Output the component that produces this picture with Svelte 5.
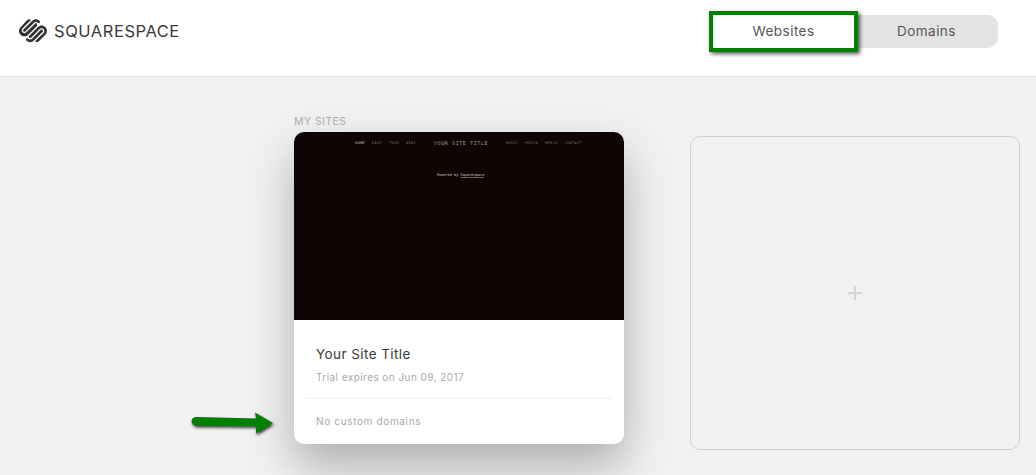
<script>
  const leftLinks = ['HOME', 'BAKE', 'TOUR', 'NEWS'];
  const rightLinks = ['MUSIC', 'MEDIA', 'MERCH', 'CONTACT'];
</script>

<div class="page">
  <header class="topbar">
    <div class="logo">
      <svg class="mark" viewBox="0 0 24 24" width="28" height="28" aria-hidden="true">
        <path fill="#333" d="M22.655 8.719c-1.802-1.801-4.726-1.801-6.564 0l-7.351 7.35c-.45.45-.45 1.2 0 1.65.45.449 1.2.449 1.65 0l7.351-7.351c.899-.899 2.362-.899 3.264 0 .9.9.9 2.364 0 3.264l-7.239 7.239c.9.899 2.362.899 3.263 0l5.589-5.589c1.836-1.838 1.836-4.763.037-6.563zm-2.475 2.437c-.451-.45-1.201-.45-1.65 0l-7.354 7.389c-.9.899-2.361.899-3.262 0-.45-.45-1.2-.45-1.65 0s-.45 1.2 0 1.649c1.801 1.801 4.726 1.801 6.564 0l7.351-7.35c.449-.487.449-1.239.001-1.688zm-2.476-7.833c-1.801-1.8-4.726-1.8-6.563 0l-7.351 7.351c-.45.449-.45 1.199 0 1.649s1.2.45 1.65 0l7.395-7.351c.9-.899 2.365-.899 3.264 0 .45.45 1.2.45 1.65 0s.45-1.2-.045-1.649zm-2.437 2.437c-.45-.45-1.2-.45-1.65 0l-7.351 7.389c-.899.9-2.363.9-3.265 0-.9-.9-.9-2.363 0-3.264l7.239-7.239c-.9-.9-2.362-.9-3.263 0L1.35 8.719c-1.8 1.8-1.8 4.725 0 6.563 1.801 1.801 4.725 1.801 6.564 0l7.35-7.351c.451-.45.451-1.2.003-1.649z"/>
      </svg>
      <span class="wordmark">SQUARESPACE</span>
    </div>
    <nav class="tabs">
      <div class="tab active">Websites</div>
      <div class="tab">Domains</div>
    </nav>
  </header>

  <main class="content">
    <svg class="arrow" viewBox="0 0 90 30" width="90" height="30" aria-hidden="true">
      <path fill="#008000" d="M6 7 L66 8.5 L65 2.5 L83 13 L66 23.5 L66 16 L6 15.5 C0 15 0 7.5 6 7 Z"/>
    </svg>

    <section class="sites">
      <div class="label">MY SITES</div>
      <article class="site-card">
        <div class="preview">
          <div class="preview-nav">
            <div class="links">
              {#each leftLinks as link, i}
                <span class:current={i === 0}>{link}</span>
              {/each}
            </div>
            <div class="preview-title">YOUR SITE TITLE</div>
            <div class="links">
              {#each rightLinks as link}
                <span>{link}</span>
              {/each}
            </div>
          </div>
          <div class="powered">Powered by <u>Squarespace</u></div>
        </div>
        <div class="info">
          <h2>Your Site Title</h2>
          <p>Trial expires on Jun 09, 2017</p>
        </div>
        <div class="domains">No custom domains</div>
      </article>
    </section>

    <div class="add-site"><span class="plus"></span></div>
  </main>
</div>

<style>
  :global(body) {
    margin: 0;
    background: #f1f1f1;
  }

  .page {
    width: 1036px;
    height: 475px;
    overflow: hidden;
    background: #f1f1f1;
    font-family: Inter, "Liberation Sans", sans-serif;
  }

  .topbar {
    height: 77px;
    box-sizing: border-box;
    display: flex;
    align-items: flex-start;
    justify-content: space-between;
    padding: 11px 38px 0 19px;
    background: #fff;
    border-bottom: 1px solid #e6e6e6;
  }

  .logo {
    display: flex;
    align-items: center;
    gap: 7px;
    margin-top: 6px;
    color: #333;
  }

  .wordmark {
    font-size: 16.5px;
    letter-spacing: 0.55px;
    color: #3a3a3a;
  }

  .tabs {
    display: flex;
    align-items: center;
    height: 41px;
  }

  .tab {
    width: 140px;
    box-sizing: border-box;
    padding-right: 3px;
    height: 33px;
    line-height: 33px;
    text-align: center;
    font-size: 13.5px;
    letter-spacing: 0.45px;
    color: #555;
    background: #e3e3e3;
    border-radius: 0 10px 10px 0;
  }

  .tab.active {
    width: 149px;
    height: 41px;
    padding-right: 0;
    background: #fff;
    border: 4px solid #008000;
    border-radius: 0;
    box-shadow: 2px 2px 4px rgba(0, 0, 0, 0.65);
    position: relative;
    z-index: 1;
  }

  .content {
    position: relative;
    display: flex;
    align-items: flex-start;
    gap: 66px;
    padding: 39px 0 0 294px;
  }

  .arrow {
    position: absolute;
    left: 190px;
    top: 333px;
    filter: drop-shadow(1px 2px 1.5px rgba(0, 0, 0, 0.75));
  }

  .sites {
    width: 330px;
  }

  .label {
    height: 16px;
    line-height: 11px;
    font-size: 10.5px;
    letter-spacing: 0.45px;
    color: #a9aca6;
  }

  .site-card {
    height: 312px;
    display: flex;
    flex-direction: column;
    background: #fff;
    border-radius: 10px;
    overflow: hidden;
    box-shadow: 0 22px 46px rgba(0, 0, 0, 0.28);
  }

  .preview {
    height: 188px;
    flex: none;
    background: #0e0504;
    font-family: "DejaVu Sans Mono", monospace;
    color: #7f7672;
  }

  .preview-nav {
    display: flex;
    align-items: center;
    justify-content: center;
    height: 22px;
    padding-left: 19px;
    gap: 18px;
    font-size: 3.3px;
    letter-spacing: 0.5px;
  }

  .links {
    display: flex;
    gap: 7px;
  }

  .current {
    color: #d8d4d2;
  }

  .preview-title {
    font-size: 5px;
    letter-spacing: 0.6px;
    color: #a89f9b;
  }

  .powered {
    margin-top: 19px;
    padding-left: 3px;
    text-align: center;
    font-size: 3.6px;
    color: #c8c4c2;
  }

  .powered u {
    text-decoration-color: #6d6562;
  }

  .info {
    height: 79px;
    box-sizing: border-box;
    margin: 0 11px;
    padding: 26px 0 0 11px;
    border-bottom: 1px solid #efefef;
  }

  h2 {
    margin: 0;
    font-size: 13.5px;
    line-height: 17px;
    font-weight: 400;
    letter-spacing: 0.42px;
    color: #3a3a3a;
  }

  p {
    margin: 7px 0 0;
    font-size: 10px;
    line-height: 14px;
    letter-spacing: 0.44px;
    color: #a9a9a9;
  }

  .domains {
    padding: 15px 0 0 22px;
    font-size: 10px;
    line-height: 14px;
    letter-spacing: 0.65px;
    color: #a9a9a9;
  }

  .add-site {
    width: 330px;
    height: 314px;
    box-sizing: border-box;
    margin-top: 20px;
    display: flex;
    align-items: center;
    justify-content: center;
    border: 1px solid #cfcfcf;
    border-radius: 10px;
  }

  .plus {
    width: 14px;
    height: 14px;
    background:
      linear-gradient(#d4d4d4, #d4d4d4) center / 14px 2px no-repeat,
      linear-gradient(#d4d4d4, #d4d4d4) center / 2px 14px no-repeat;
  }
</style>
